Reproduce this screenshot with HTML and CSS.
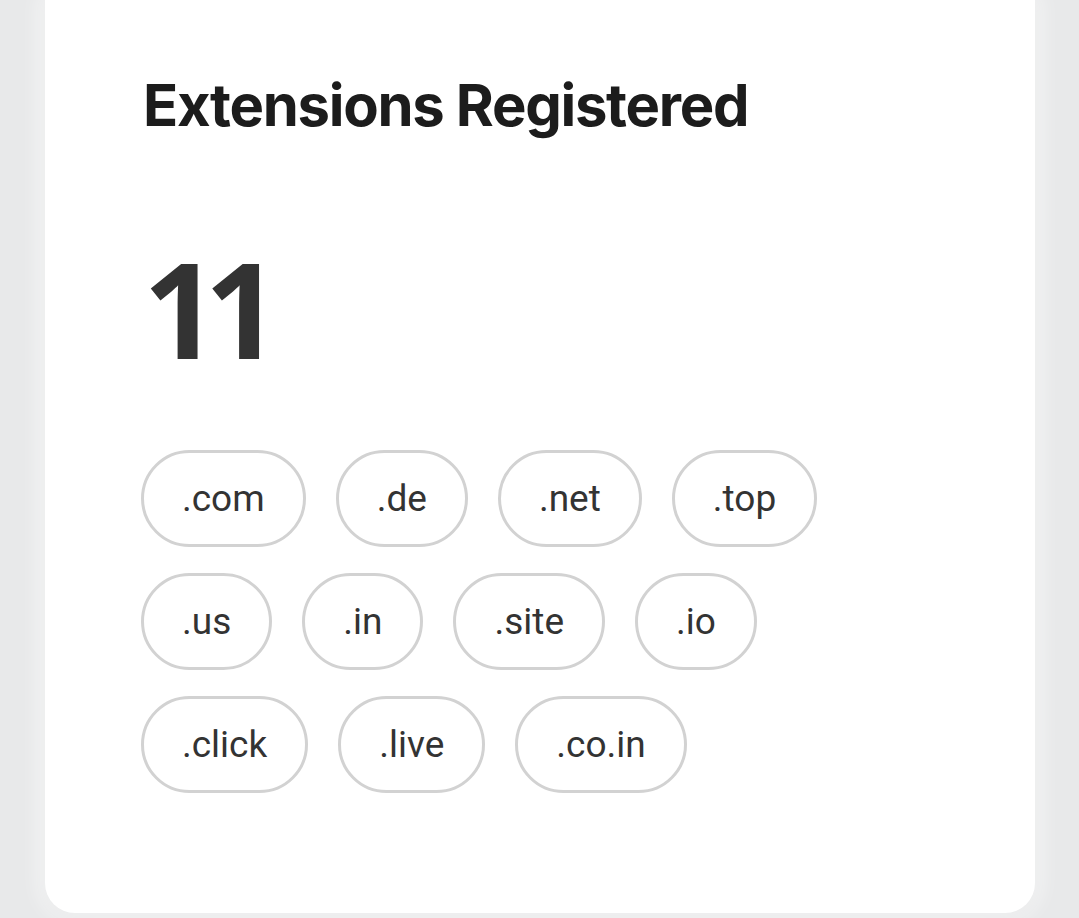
FILE: index.html
```html
<!DOCTYPE html>
<html>
<head>
<meta charset="utf-8">
<link rel="stylesheet" href="styles.css">
</head>
<body>
<div class="page">
  <div class="card">
    <h2 class="title">Extensions Registered</h2>
    <div class="count">11</div>
    <div class="chips">
      <span class="chip">.com</span>
      <span class="chip">.de</span>
      <span class="chip">.net</span>
      <span class="chip">.top</span>
      <span class="chip">.us</span>
      <span class="chip">.in</span>
      <span class="chip">.site</span>
      <span class="chip">.io</span>
      <span class="chip">.click</span>
      <span class="chip">.live</span>
      <span class="chip">.co.in</span>
    </div>
  </div>
</div>
</body>
</html>
```
FILE: styles.css
```css
html, body {
  margin: 0;
  padding: 0;
  height: 100%;
  overflow: hidden;
}
body {
  background: #e8e9ea;
}
.page {
  padding: 0 44px 0 45px;
  height: 918px;
  box-sizing: border-box;
}
.card {
  background: #fff;
  height: 913px;
  box-sizing: border-box;
  border-radius: 0 0 30px 30px;
  box-shadow: 0 0 20px 6px rgba(255,255,255,0.6), 0 2px 12px rgba(0,0,0,0.05);
  padding: 70px 98px 0 98px;
}
.title {
  margin: 0;
  font-family: Inter, "Liberation Sans", sans-serif;
  font-weight: 700;
  font-size: 58px;
  line-height: 70px;
  color: #1c1c1c;
  letter-spacing: -1.3px;
}
.count {
  margin-top: 98px;
  font-family: "Open Sans", "Liberation Sans", sans-serif;
  font-weight: 700;
  font-size: 132px;
  line-height: 140px;
  color: #333;
  letter-spacing: -14px;
}
.chips {
  margin: 72px 0 0 -2px;
  display: flex;
  flex-wrap: wrap;
  gap: 26px 30px;
  width: 700px;
}
.chip {
  display: inline-flex;
  align-items: center;
  justify-content: center;
  height: 97px;
  box-sizing: border-box;
  padding: 0 38px;
  border: 3px solid #d2d2d2;
  border-radius: 50px;
  font-family: Roboto, "Liberation Sans", sans-serif;
  font-size: 37px;
  color: #333;
}
```
